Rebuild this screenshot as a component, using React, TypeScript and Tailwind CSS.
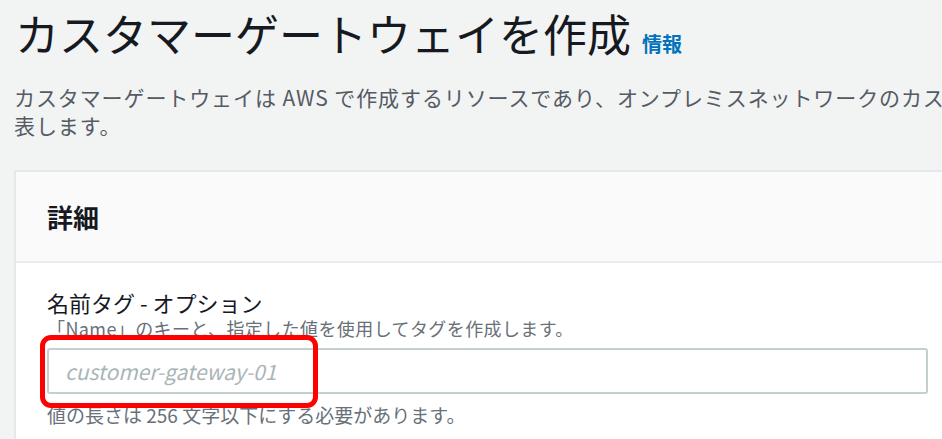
const jp = { fontFamily: '"Noto Sans CJK JP", "Noto Sans", sans-serif' };

export default function App() {
  return (
    <div className="h-screen w-screen overflow-hidden bg-[#f2f3f3]" style={jp}>
      <div className="w-[1300px] pl-[14px]">
        <div className="flex items-baseline pt-[5px]">
          <h1 className="text-[44px] leading-[56px] font-normal text-[#16191f] pl-[1px]">
            カスタマーゲートウェイを作成
          </h1>
          <a className="ml-[11px] text-[20px] font-bold text-[#0073bb]">情報</a>
        </div>

        <p className="mt-[22px] text-[21px] leading-[28px] tracking-[0.9px] text-[#545b64] whitespace-nowrap">
          カスタマーゲートウェイは AWS で作成するリソースであり、オンプレミスネットワークのカスタマーゲートウェイデバイスを
          <br />
          表します。
        </p>

        <div className="mt-[31px] border-t-2 border-l-2 border-[#e5e8e8] bg-white">
          <div className="h-[91px] flex items-center px-[31px] bg-[#fafafa] border-b-2 border-[#eaeded]">
            <h2 className="text-[26px] font-bold text-[#16191f]">詳細</h2>
          </div>

          <div className="px-[31px] pt-[24px] pb-[20px]">
            <label className="block text-[22px] leading-[30px] text-[#16191f]">
              名前タグ - オプション
            </label>
            <p className="text-[18px] leading-[22px] tracking-[0.4px] text-[#687078]">
              「Name」のキーと、指定した値を使用してタグを作成します。
            </p>

            <div className="relative mt-[9px] w-[881px]">
              <input
                placeholder="customer-gateway-01"
                className="block w-full h-[46px] px-[16px] rounded-[3px] border-2 border-[#c5cfd0] bg-white text-[21px] italic placeholder:text-[#a9b5b7] outline-none"
                style={jp}
              />
              <div className="absolute left-[-7px] top-[-13px] w-[278px] h-[73px] rounded-[11px] border-[5px] border-[#ff0000]" />
            </div>

            <p className="mt-[10px] text-[19px] leading-[22px] text-[#687078]">
              値の長さは 256 文字以下にする必要があります。
            </p>
          </div>
        </div>
      </div>
    </div>
  );
}
